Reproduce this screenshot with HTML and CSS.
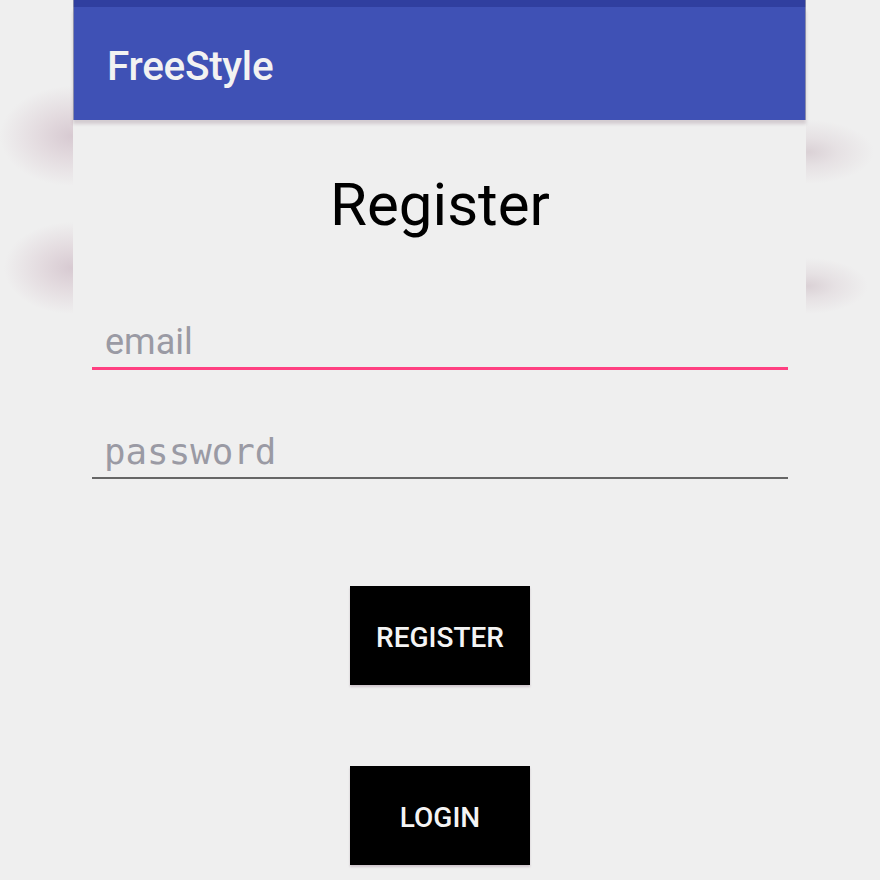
FILE: index.html
```html
<!DOCTYPE html>
<html lang="en">
<head>
<meta charset="utf-8">
<title>FreeStyle - Register</title>
<link rel="stylesheet" href="styles.css">
</head>
<body>
<div class="phone">
  <div class="status-bar"></div>
  <header class="toolbar"><h1 class="app-title">FreeStyle</h1></header>
  <main class="content">
    <h2 class="page-title">Register</h2>
    <div class="field field-focused"><span class="hint">email</span></div>
    <div class="field field-password"><span class="hint hint-mono">password</span></div>
    <div class="actions">
      <button class="btn" type="button">REGISTER</button>
      <button class="btn" type="button">LOGIN</button>
    </div>
  </main>
</div>
</body>
</html>
```
FILE: styles.css
```css
html, body {
  margin: 0;
  padding: 0;
}
body {
  width: 880px;
  height: 880px;
  overflow: hidden;
  background-color: #efefef;
  background-image:
    radial-gradient(ellipse 72px 50px at 72px 136px, rgba(214,200,208,0.95), rgba(222,210,216,0.7) 45%, rgba(239,239,239,0) 100%),
    radial-gradient(ellipse 68px 46px at 72px 268px, rgba(214,200,208,0.95), rgba(222,210,216,0.7) 45%, rgba(239,239,239,0) 100%),
    radial-gradient(ellipse 66px 32px at 808px 152px, rgba(216,206,211,0.9), rgba(224,216,220,0.6) 45%, rgba(239,239,239,0) 100%),
    radial-gradient(ellipse 60px 28px at 808px 286px, rgba(216,206,211,0.9), rgba(224,216,220,0.6) 45%, rgba(239,239,239,0) 100%);
  background-repeat: no-repeat;
  font-family: Roboto, "Noto Sans", Arial, sans-serif;
}
.phone {
  width: 733px;
  height: 880px;
  margin: 0 0 0 73px;
  background: #efefef;
}
.status-bar {
  height: 7px;
  background: #303f9f;
  box-shadow: inset 1px 0 #7f84a6, inset -1px 0 #7f84a6;
}
.toolbar {
  height: 113px;
  box-sizing: border-box;
  padding: 39px 0 0 34px;
  background: #3f51b5;
  box-shadow: inset 1px 0 #8a8eab, inset -1px 0 #8a8eab, 0 4px 3px rgba(150, 125, 140, 0.3);
  position: relative;
  z-index: 1;
}
.app-title {
  margin: 0;
  font-family: Roboto, sans-serif;
  font-weight: 500;
  font-size: 40.5px;
  line-height: 41px;
  color: #f2f2f2;
  letter-spacing: -0.3px;
}
.content {
  display: flex;
  flex-direction: column;
  padding: 0 18px 0 19px;
}
.page-title {
  margin: 55px 0 0;
  text-align: center;
  font-family: Roboto, sans-serif;
  font-weight: 400;
  font-size: 60px;
  line-height: 60px;
  color: #000;
}
.field {
  height: 43px;
  padding-left: 13px;
  border-bottom: 2px solid #666666;
}
.field-focused {
  margin-top: 89px;
  border-bottom: 3px solid #ff4081;
}
.field-password {
  margin-top: 64px;
}
.hint {
  display: block;
  font-family: Roboto, "Noto Sans", sans-serif;
  font-size: 36px;
  line-height: 36px;
  color: #9a9aa4;
}
.hint-mono {
  font-family: "DejaVu Sans Mono", "Liberation Mono", monospace;
  font-size: 35.8px;
  margin-left: -1px;
}
.actions {
  display: flex;
  flex-direction: column;
  align-items: center;
  gap: 81px;
  margin-top: 107px;
}
.btn {
  width: 180px;
  height: 99px;
  border: 0;
  margin: 0;
  padding: 0;
  background: #000;
  color: #f4f4f4;
  font-family: Roboto, sans-serif;
  font-weight: 500;
  font-size: 28px;
  box-shadow: 0 2px 2px rgba(150, 120, 140, 0.35);
  display: flex;
  align-items: center;
  justify-content: center;
  padding-top: 3px;
}
```
